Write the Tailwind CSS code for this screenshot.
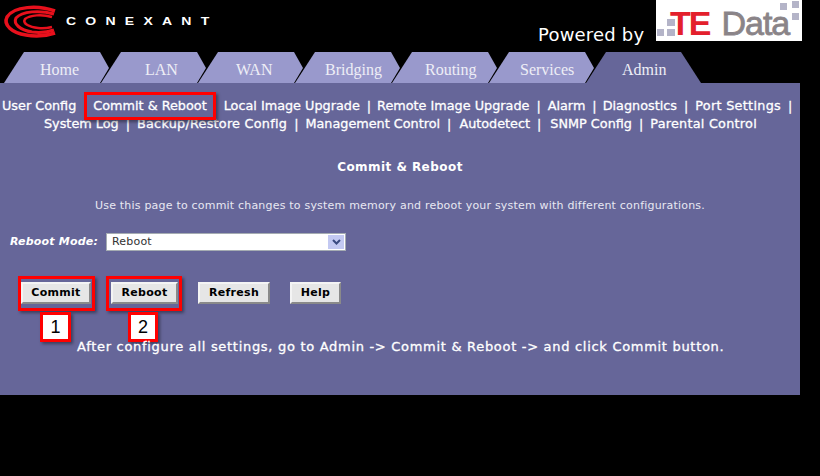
<!DOCTYPE html>
<html lang="en">
<head>
  <meta charset="UTF-8">
  <title>Commit &amp; Reboot</title>
  <script src="https://cdn.jsdelivr.net/npm/@tailwindcss/browser@4"></script>
</head>
<body class="bg-black w-[820px] h-[476px] overflow-hidden font-['DejaVu_Sans',sans-serif] text-white">

  <!-- header -->
  <div class="h-[52px] flex items-start relative">
    <svg width="60" height="45" viewBox="0 0 60 45" class="shrink-0" fill="none" stroke="#e8101c">
      <path d="M55 11 C38 5 14 6 7 17 C3 25 12 33 26 35 C36 37 46 36 55 33" stroke-width="3.5"/>
      <path d="M54 14 C40 10 22 11 16 18 C13 24 20 30 32 32 C40 33 48 32 54 30" stroke-width="3"/>
      <path d="M52 17 C42 14 30 15 25 19 C22 24 30 27 38 28 C44 29 48 28 52 27" stroke-width="2.5"/>
    </svg>
    <div class="ml-[6px] mt-[16px] origin-left scale-x-[1.4] font-['Liberation_Sans',sans-serif] font-bold text-[10px] leading-[12px] tracking-[6.6px] whitespace-nowrap">CONEXANT</div>
    <div class="absolute left-[538px] top-[24px] text-[18px] tracking-[0.2px] leading-[22px] whitespace-nowrap">Powered by</div>
    <div class="absolute left-[656px] top-0 w-[146px] h-[41px] bg-white overflow-hidden">
      <div class="pl-[14px] flex items-baseline font-['Liberation_Sans',sans-serif] text-[34px] leading-[47px] whitespace-nowrap">
        <span class="text-[#e3202c] font-bold tracking-[-2px]">TE</span>
        <span class="text-[#8a8488] ml-[12px] tracking-[-1px] [-webkit-text-stroke:0.8px_#8a8488]">Data</span>
      </div>
      <svg width="146" height="41" viewBox="0 0 146 41" class="absolute left-0 top-0" fill="#b4b4c8">
        <rect x="11" y="19" width="8" height="7"/>
        <rect x="1" y="29" width="7" height="7"/>
        <rect x="11" y="29" width="8" height="7"/>
        <rect x="124" y="3" width="7" height="7"/>
        <rect x="136" y="1" width="7" height="7"/>
        <rect x="136" y="13" width="7" height="7"/>
      </svg>
    </div>
  </div>

  <!-- tabs -->
  <div class="h-[31px] flex pl-[4px] font-['Liberation_Serif',serif] text-[16px] text-[#eeeef6]">
    <div class="w-[105px] shrink-0 bg-[#9999cc] [clip-path:polygon(20px_0,96px_0,105px_16px,96px_31px,0_31px)] pt-[6px] pl-[36px]">Home</div>
    <div class="w-[105px] shrink-0 -ml-[8px] bg-[#9999cc] [clip-path:polygon(20px_0,96px_0,105px_16px,96px_31px,0_31px)] pt-[6px] pl-[44px]">LAN</div>
    <div class="w-[105px] shrink-0 -ml-[8px] bg-[#9999cc] [clip-path:polygon(20px_0,96px_0,105px_16px,96px_31px,0_31px)] pt-[6px] pl-[38px]">WAN</div>
    <div class="w-[105px] shrink-0 -ml-[8px] bg-[#9999cc] [clip-path:polygon(20px_0,96px_0,105px_16px,96px_31px,0_31px)] pt-[6px] pl-[30px]">Bridging</div>
    <div class="w-[105px] shrink-0 -ml-[8px] bg-[#9999cc] [clip-path:polygon(20px_0,96px_0,105px_16px,96px_31px,0_31px)] pt-[6px] pl-[33px]">Routing</div>
    <div class="w-[105px] shrink-0 -ml-[8px] bg-[#9999cc] [clip-path:polygon(20px_0,96px_0,105px_16px,96px_31px,0_31px)] pt-[6px] pl-[31px]">Services</div>
    <div class="w-[115px] shrink-0 -ml-[8px] bg-[#666699] [clip-path:polygon(20px_0,95px_0,115px_31px,0_31px)] pt-[6px] pl-[36px]">Admin</div>
  </div>

  <!-- panel -->
  <div class="w-[800px] h-[312px] bg-[#666699] relative">
    <div class="text-[12.8px] leading-[18px] pt-[14px] whitespace-nowrap [-webkit-text-stroke:0.3px_white]">
      <div class="flex pl-[2px] gap-[7px]">
        <span>User Config</span>
        <span class="relative mx-[1px] px-[9px]">Commit &amp; Reboot<span class="absolute -inset-y-[5px] inset-x-0 border-[3px] border-[#ff0000] shadow-[2px_2px_3px_rgba(0,0,0,0.4)]"></span></span>
        <span>Local Image Upgrade</span><span>|</span>
        <span class="-ml-[1px]">Remote Image Upgrade</span><span>|</span>
        <span>Alarm</span><span>|</span>
        <span class="-ml-[1px]">Diagnostics</span><span>|</span>
        <span class="tracking-[0.3px]">Port Settings</span><span>|</span>
      </div>
      <div class="flex pl-[44px] gap-[7px]">
        <span>System Log</span><span>|</span>
        <span class="tracking-[0.25px]">Backup/Restore Config</span><span>|</span>
        <span>Management Control</span><span>|</span>
        <span class="ml-[1px]">Autodetect</span><span>|</span>
        <span class="ml-[2px]">SNMP Config</span><span>|</span>
        <span class="tracking-[0.25px]">Parental Control</span>
      </div>
    </div>

    <div class="text-center text-[12px] tracking-[0.45px] font-bold leading-[14px] mt-[27px]">Commit &amp; Reboot</div>
    <div class="text-center text-[11px] tracking-[0.2px] text-[#e8e8f2] leading-[14px] mt-[25px]">Use this page to commit changes to system memory and reboot your system with different configurations.</div>

    <div class="flex items-center mt-[20px] pl-[10px]">
      <span class="text-[11px] tracking-[0.2px] italic font-bold w-[96px]">Reboot Mode:</span>
      <div class="w-[240px] h-[18px] bg-white border border-[#a5acb2] flex items-center justify-between text-[11px] tracking-[0.2px] text-[#333] pl-[5px] pr-[1px]">
        <span>Reboot</span>
        <span class="w-[16px] h-[14px] bg-[#c3c9f2] flex items-center justify-center">
          <svg width="9" height="7" viewBox="0 0 9 7" fill="none" stroke="#3a4a80" stroke-width="2"><path d="M1 1l3.5 3.5L8 1"/></svg>
        </span>
      </div>
    </div>

    <div class="flex mt-[31px] pl-[21px] items-start text-[11px] tracking-[0.3px] font-bold text-black">
      <div class="relative w-[70px] h-[22px] bg-[#e6e6e6] border-2 border-t-[#f4f4f4] border-l-[#f4f4f4] border-r-[#8a8a8a] border-b-[#8a8a8a] flex items-center justify-center">Commit<span class="absolute -left-[5px] -right-[6px] -top-[8px] -bottom-[9px] border-[3px] border-[#ff0000] shadow-[2px_2px_3px_rgba(0,0,0,0.4)]"></span></div>
      <div class="relative w-[67px] h-[22px] ml-[20px] bg-[#e6e6e6] border-2 border-t-[#f4f4f4] border-l-[#f4f4f4] border-r-[#8a8a8a] border-b-[#8a8a8a] flex items-center justify-center">Reboot<span class="absolute -left-[7px] -right-[6px] -top-[8px] -bottom-[9px] border-[3px] border-[#ff0000] shadow-[2px_2px_3px_rgba(0,0,0,0.4)]"></span></div>
      <div class="w-[72px] h-[22px] ml-[20px] bg-[#e6e6e6] border-2 border-t-[#f4f4f4] border-l-[#f4f4f4] border-r-[#8a8a8a] border-b-[#8a8a8a] flex items-center justify-center">Refresh</div>
      <div class="w-[51px] h-[22px] ml-[20px] bg-[#e6e6e6] border-2 border-t-[#f4f4f4] border-l-[#f4f4f4] border-r-[#8a8a8a] border-b-[#8a8a8a] flex items-center justify-center">Help</div>
    </div>

    <div class="absolute left-[40px] top-[229px] w-[31px] h-[30px] bg-white border-[3px] border-[#ff0000] shadow-[2px_2px_3px_rgba(0,0,0,0.4)] flex items-center justify-center font-['Liberation_Sans',sans-serif] text-[18px] text-black">1</div>
    <div class="absolute left-[128px] top-[229px] w-[30px] h-[30px] bg-white border-[3px] border-[#ff0000] shadow-[2px_2px_3px_rgba(0,0,0,0.4)] flex items-center justify-center font-['Liberation_Sans',sans-serif] text-[18px] text-black">2</div>

    <div class="absolute left-[77px] top-[255px] text-[13px] tracking-[0.7px] leading-[18px] whitespace-nowrap [-webkit-text-stroke:0.3px_white]">After configure all settings, go to Admin -&gt; Commit &amp; Reboot -&gt; and click Commit button.</div>
  </div>
</body>
</html>
